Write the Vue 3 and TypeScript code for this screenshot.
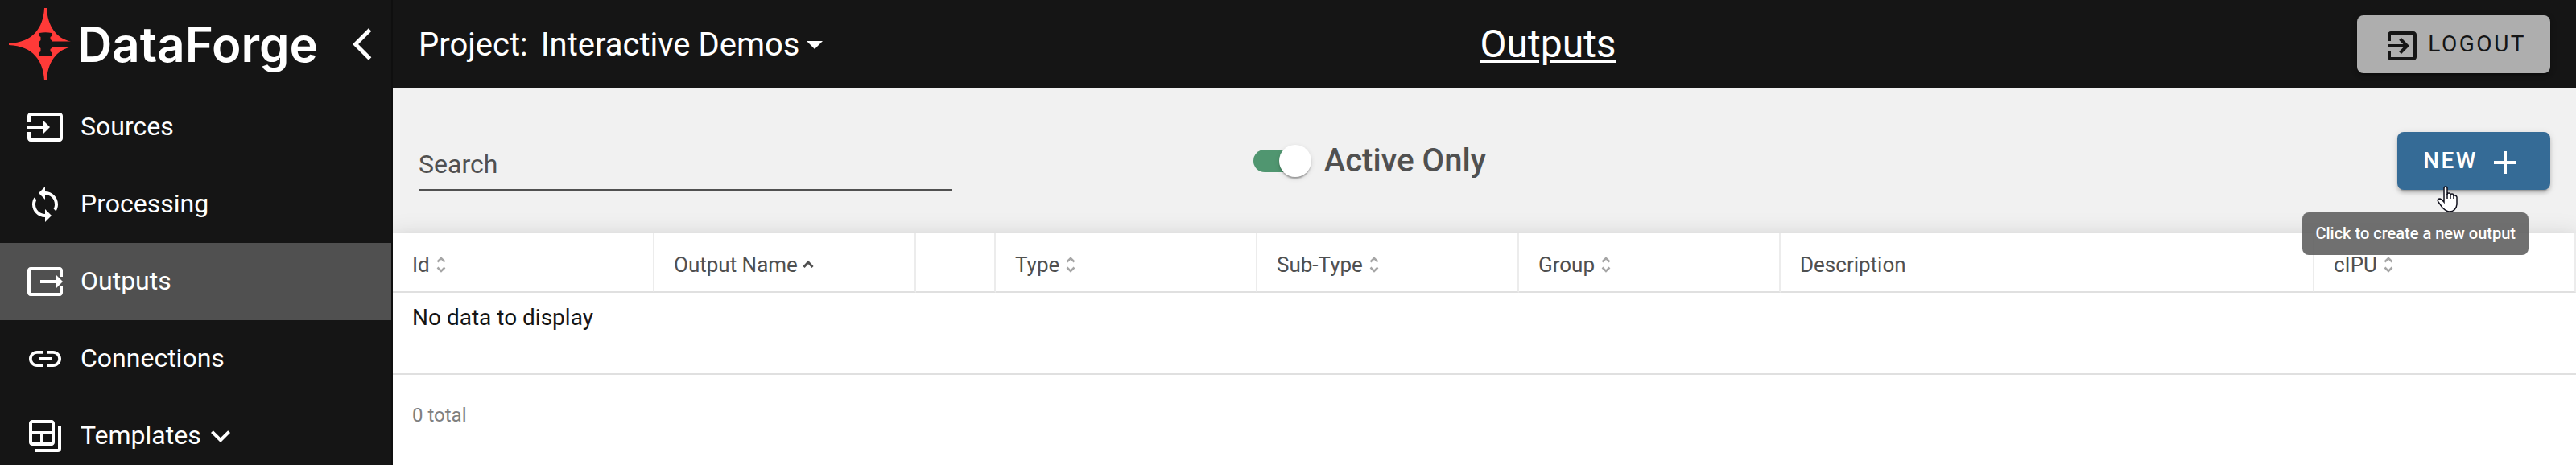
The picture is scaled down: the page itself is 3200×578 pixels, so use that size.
<script setup lang="ts">
import { ref } from 'vue'

interface NavItem { label: string; path: string; expandable?: boolean }
interface Column { label: string; kind: 'narrow' | 'wide' | 'normal'; sort: 'none' | 'both' | 'asc' }

const navItems: NavItem[] = [
  { label: 'Sources', path: 'M21 3.01H3c-1.1 0-2 .9-2 2V9h2V4.99h18v14.03H3V15H1v4.01c0 1.1.9 1.98 2 1.98h18c1.1 0 2-.88 2-1.98v-14c0-1.11-.9-2-2-2zM11 16l4-4-4-4v3H1v2h10v3z' },
  { label: 'Processing', path: 'M12 4V1L8 5l4 4V6c3.31 0 6 2.69 6 6 0 1.01-.25 1.97-.7 2.8l1.46 1.46C19.54 15.03 20 13.57 20 12c0-4.42-3.58-8-8-8zm0 14c-3.31 0-6-2.69-6-6 0-1.01.25-1.97.7-2.8L5.24 7.74C4.46 8.97 4 10.43 4 12c0 4.42 3.58 8 8 8v3l4-4-4-4v3z' },
  { label: 'Outputs', path: 'M3 3h18c1.1 0 2 .9 2 2v4h-2V5H3v14h18v-4h2v4c0 1.1-.9 2-2 2H3c-1.1 0-2-.9-2-2V5c0-1.1.9-2 2-2zM19 16l4-4-4-4v3H9v2h10v3z' },
  { label: 'Connections', path: 'M3.9 12c0-1.71 1.39-3.1 3.1-3.1h4V7H7c-2.76 0-5 2.24-5 5s2.24 5 5 5h4v-1.9H7c-1.71 0-3.1-1.39-3.1-3.1zM8 13h8v-2H8v2zm9-6h-4v1.9h4c1.71 0 3.1 1.39 3.1 3.1s-1.39 3.1-3.1 3.1h-4V17h4c2.76 0 5-2.24 5-5s-2.24-5-5-5z' },
  { label: 'Templates', expandable: true, path: 'M20 6v14H6v2h14c1.1 0 2-.9 2-2V6h-2zM16 2H4c-1.1 0-2 .9-2 2v12c0 1.1.9 2 2 2h12c1.1 0 2-.9 2-2V4c0-1.1-.9-2-2-2zM9 16H4v-5h5v5zm7 0h-5v-5h5v5zm0-7H4V4h12v5z' },
]

const columns: Column[] = [
  { label: 'Id', kind: 'normal', sort: 'both' },
  { label: 'Output Name', kind: 'normal', sort: 'asc' },
  { label: '', kind: 'narrow', sort: 'none' },
  { label: 'Type', kind: 'normal', sort: 'both' },
  { label: 'Sub-Type', kind: 'normal', sort: 'both' },
  { label: 'Group', kind: 'normal', sort: 'both' },
  { label: 'Description', kind: 'wide', sort: 'none' },
  { label: 'cIPU', kind: 'normal', sort: 'both' },
]

const current = ref('Outputs')
const search = ref('')
const activeOnly = ref(true)
</script>

<template>
  <div class="app">
    <aside class="sidebar">
      <div class="brand">
        <a class="logo" href="#" aria-label="DataForge">
          <svg class="emblem" viewBox="0 0 78 90" aria-hidden="true">
            <path fill="#ff3a38" d="M44 0h3C48 22 59 38 77 41.500H53V40L51.500 39V36L53 35V31Q45.500 29.500 38 31V35L39.500 36V40L38 41.500Q36.500 45 38 48.500L39.500 50V54L38 55V59Q45.500 60.500 53 59V55L51.500 54V51L53 50V48.500H77C59 52 48 68 47 90h-3C43 66 30 47 0 46V44C30 43 43 24 44 0z" />
          </svg>
          <span class="wordmark">DataForge</span>
        </a>
        <button class="collapse" type="button" aria-label="Collapse menu">
          <svg viewBox="0 0 24 24"><path d="M11.67 3.87L9.9 2.1 0 12l9.9 9.9 1.77-1.77L3.54 12z" /></svg>
        </button>
      </div>
      <nav>
        <a
          v-for="item in navItems"
          :key="item.label"
          href="#"
          class="nav-item"
          :class="{ active: item.label === current }"
          @click.prevent="current = item.label"
        >
          <svg viewBox="0 0 24 24" class="nav-icon"><path :d="item.path" /></svg>
          <span class="nav-label">{{ item.label }}</span>
          <svg v-if="item.expandable" viewBox="0 0 24 24" class="expand"><path d="M16.59 8.59L12 13.17 7.41 8.59 6 10l6 6 6-6z" /></svg>
        </a>
      </nav>
    </aside>

    <div class="main">
      <header class="topbar">
        <div class="project">
          <span>Project:</span>
          <button type="button" class="project-picker">
            Interactive Demos
            <svg viewBox="0 0 20 10" class="caret"><path d="M0 0h20L10 10z" /></svg>
          </button>
        </div>
        <h1>Outputs</h1>
        <div class="topbar-end">
          <button type="button" class="btn logout">
            <svg viewBox="0 0 24 24" class="btn-icon"><path d="M10.09 15.59L11.5 17l5-5-5-5-1.41 1.41L12.67 11H3v2h9.67l-2.58 2.59zM19 3H5c-1.11 0-2 .9-2 2v4h2V5h14v14H5v-4H3v4c0 1.1.89 2 2 2h14c1.1 0 2-.9 2-2V5c0-1.1-.9-2-2-2z" /></svg>
            <span>LOGOUT</span>
          </button>
        </div>
      </header>

      <section class="toolbar">
        <input v-model="search" class="search" type="text" placeholder="Search" aria-label="Search" />
        <label class="toggle">
          <input v-model="activeOnly" type="checkbox" role="switch" />
          <span>Active Only</span>
        </label>
        <div class="toolbar-end">
          <button type="button" class="btn new" aria-describedby="new-tip">
            <span>NEW</span>
            <svg viewBox="0 0 24 24" class="btn-icon"><path d="M19 13h-6v6h-2v-6H5v-2h6V5h2v6h6v2z" /></svg>
          </button>
          <svg class="pointer" viewBox="0 0 26 33" aria-hidden="true">
            <path d="M9 19V3Q9 1 11 1T13 3V11Q13 9 15 9T17 11V12Q17 10 19 10T21 12V13Q21 11 23 12T25 14V22C25 28 21 32 16 32C12 32 9 29 7 27L2 20C0 17 2 16 4 16Q7 17 9 20z" />
            <path d="M13 10v6M17 11v5M21 12v4" />
          </svg>
          <div id="new-tip" class="tooltip" role="tooltip">Click to create a new output</div>
        </div>
      </section>

      <section class="grid-card">
        <table>
          <colgroup>
            <col v-for="(c, i) in columns" :key="i" :class="c.kind" />
          </colgroup>
          <thead>
            <tr>
              <th v-for="(c, i) in columns" :key="i" scope="col">
                <span class="head">
                  {{ c.label }}
                  <svg v-if="c.sort === 'both'" class="sort both" viewBox="0 0 12 20"><path d="M1.500 6.500 6 2l4.500 4.500M1.500 13.500 6 18l4.500-4.500" /></svg>
                  <svg v-if="c.sort === 'asc'" class="sort asc" viewBox="0 0 14 20"><path d="M1.500 13 7 7l5.500 6" /></svg>
                </span>
              </th>
            </tr>
          </thead>
          <tbody>
            <tr><td :colspan="columns.length">No data to display</td></tr>
          </tbody>
        </table>
        <footer>0 total</footer>
      </section>
    </div>
  </div>
</template>

<style>
body { margin: 0; background: #fff; }
</style>

<style scoped>
* { box-sizing: border-box; }
.app {
  display: flex;
  min-height: 100vh;
  font-family: Roboto, "Liberation Sans", sans-serif;
  color: #151515;
}
button { font: inherit; color: inherit; border: 0; background: none; padding: 0; cursor: pointer; }
a { color: inherit; text-decoration: none; }
svg { display: block; flex: none; fill: currentColor; }

.sidebar {
  flex: none;
  width: 488px;
  background: #151515;
  border-right: 2px solid #0f0f0f;
  color: #fff;
}
.brand { display: flex; align-items: center; height: 110px; padding-left: 11px; }
.logo { display: flex; align-items: center; gap: 7px; width: 427px; }
.emblem { width: 78px; height: 90px; }
.wordmark { font: 600 60px/70px Inter, sans-serif; }
.collapse svg { width: 48px; height: 48px; }
.nav-item {
  display: flex;
  align-items: center;
  height: 96px;
  padding-left: 32px;
  font-size: 32px;
  line-height: 40px;
}
.nav-item.active { background: #505050; }
.nav-icon { width: 48px; height: 48px; margin-right: 20px; }
.nav-label { padding-bottom: 2px; }
.expand { width: 48px; height: 48px; }

.main { flex: 1; min-width: 0; display: flex; flex-direction: column; overflow: hidden; background: #f1f1f1; }
.topbar {
  display: grid;
  grid-template-columns: 25fr auto 22fr;
  align-items: center;
  height: 110px;
  padding: 0 32px;
  background: #151515;
  color: #fff;
}
.project { display: flex; gap: 16px; padding-top: 2px; font-size: 40px; line-height: 48px; }
.project-picker { display: flex; align-items: center; gap: 8px; }
.caret { width: 20px; height: 10px; }
h1 { margin: 0; font-size: 48px; line-height: 56px; font-weight: 400; text-decoration: underline; }
.topbar-end { display: flex; justify-content: flex-end; }
.btn {
  display: flex;
  align-items: center;
  height: 72px;
  border-radius: 8px;
  font-size: 28px;
  line-height: 72px;
  letter-spacing: 2.5px;
  box-shadow: 0 6px 2px -4px rgba(0, 0, 0, .2), 0 4px 4px rgba(0, 0, 0, .14), 0 2px 10px rgba(0, 0, 0, .12);
}
.btn-icon { width: 48px; height: 48px; margin-top: 4px; }
.logout { gap: 8px; padding: 0 30px 0 32px; background: #aeaeae; color: #151515; }

.toolbar {
  display: grid;
  grid-template-columns: 40fr auto 51fr;
  align-items: center;
  height: 180px;
  padding: 0 32px;
}
.search {
  width: 662px;
  height: 74px;
  padding: 10px 0 0;
  border: 0;
  border-bottom: 2px solid #505050;
  border-radius: 0;
  background: none;
  outline: none;
  font: 400 32px/40px Roboto, sans-serif;
  color: #151515;
}
.search::placeholder { color: #505050; opacity: 1; }
.toggle { display: flex; align-items: center; gap: 16px; font-size: 40px; line-height: 48px; font-weight: 500; color: #505050; }
.toggle input {
  appearance: none;
  position: relative;
  width: 72px;
  height: 28px;
  margin: 0;
  border-radius: 14px;
  background: linear-gradient(#509670, #509670) 0 0 / 60px 28px no-repeat;
}
.toggle input::after {
  content: "";
  position: absolute;
  right: 0;
  top: -6px;
  width: 40px;
  height: 40px;
  border-radius: 50%;
  background: #fff;
  box-shadow: 0 4px 2px -2px rgba(0, 0, 0, .2), 0 2px 2px rgba(0, 0, 0, .14), 0 2px 6px rgba(0, 0, 0, .12);
}
.toggle input:not(:checked)::after { right: 32px; }
.toolbar-end { position: relative; justify-self: end; }
.new { gap: 10px; padding: 0 32px; background: #356b96; color: #fff; font-weight: 500; }
.pointer {
  position: absolute;
  z-index: 3;
  left: 49px;
  top: 67px;
  width: 26px;
  height: 33px;
  fill: #fff;
  stroke: #10101c;
  stroke-width: 1.5;
}
.tooltip {
  position: absolute;
  z-index: 2;
  right: 27px;
  top: 100px;
  padding: 10px 16px;
  border-radius: 8px;
  background: rgba(97, 97, 97, .9);
  color: #fff;
  font-size: 20px;
  line-height: 33px;
  font-weight: 500;
  white-space: nowrap;
}

.grid-card { flex: 1; background: #fff; box-shadow: 0 10px 10px -6px rgba(0, 0, 0, .2), 0 16px 20px 2px rgba(0, 0, 0, .14), 0 6px 28px 4px rgba(0, 0, 0, .12); }
table { width: 100%; table-layout: fixed; border-collapse: separate; border-spacing: 0; }
col.narrow { width: 99px; }
col.normal { width: 325px; }
th {
  height: 74px;
  padding: 6px 24px 0;
  border-right: 2px solid #ececec;
  border-bottom: 2px solid #e0e0e0;
  text-align: left;
  font-size: 26px;
  line-height: 32px;
  font-weight: 400;
  color: #505050;
}
.head { display: flex; align-items: center; gap: 8px; }
.sort { fill: none; stroke: currentColor; height: 20px; }
.both { width: 12px; stroke: #a6a6a6; stroke-width: 2.5; }
.asc { width: 14px; margin-left: -2px; stroke-width: 3; }
td { height: 102px; padding: 13px 24px; border-bottom: 2px solid #e0e0e0; vertical-align: top; font-size: 28px; line-height: 36px; }
footer { padding: 34px 24px; font-size: 24px; line-height: 32px; color: #808080; }
</style>
